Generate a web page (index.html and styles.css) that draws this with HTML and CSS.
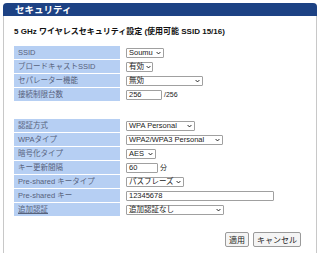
FILE: index.html
```html
<!DOCTYPE html>
<html lang="ja">
<head>
  <meta charset="utf-8">
  <title>セキュリティ</title>
  <link rel="stylesheet" href="styles.css">
</head>
<body>
  <div class="panel">
    <div class="panel-title">セキュリティ</div>
    <div class="panel-body">
      <h3>5 GHz ワイヤレスセキュリティ設定 (使用可能 SSID 15/16)</h3>

      <table class="settings">
        <tr>
          <th>SSID</th>
          <td><span class="sel w-ssid">Soumu<svg class="chev" viewBox="0 0 8 5"><path d="M1 1l3 3 3-3"/></svg></span></td>
        </tr>
        <tr>
          <th>ブロードキャストSSID</th>
          <td><span class="sel w-bcast">有効<svg class="chev" viewBox="0 0 8 5"><path d="M1 1l3 3 3-3"/></svg></span></td>
        </tr>
        <tr>
          <th>セパレーター機能</th>
          <td><span class="sel w-sep">無効<svg class="chev" viewBox="0 0 8 5"><path d="M1 1l3 3 3-3"/></svg></span></td>
        </tr>
        <tr>
          <th>接続制限台数</th>
          <td><span class="inp w-limit">256</span><span class="unit">/256</span></td>
        </tr>
      </table>

      <table class="settings second">
        <tr>
          <th>認証方式</th>
          <td><span class="sel w-auth">WPA Personal<svg class="chev" viewBox="0 0 8 5"><path d="M1 1l3 3 3-3"/></svg></span></td>
        </tr>
        <tr>
          <th>WPAタイプ</th>
          <td><span class="sel w-wpa">WPA2/WPA3 Personal<svg class="chev" viewBox="0 0 8 5"><path d="M1 1l3 3 3-3"/></svg></span></td>
        </tr>
        <tr>
          <th>暗号化タイプ</th>
          <td><span class="sel w-enc">AES<svg class="chev" viewBox="0 0 8 5"><path d="M1 1l3 3 3-3"/></svg></span></td>
        </tr>
        <tr>
          <th>キー更新間隔</th>
          <td><span class="inp w-interval">60</span><span class="unit">分</span></td>
        </tr>
        <tr>
          <th>Pre-shared キータイプ</th>
          <td><span class="sel w-keytype">パスフレーズ<svg class="chev" viewBox="0 0 8 5"><path d="M1 1l3 3 3-3"/></svg></span></td>
        </tr>
        <tr>
          <th>Pre-shared キー</th>
          <td><span class="inp w-key">12345678</span></td>
        </tr>
        <tr>
          <th><a href="#">追加認証</a></th>
          <td><span class="sel w-extra">追加認証なし<svg class="chev" viewBox="0 0 8 5"><path d="M1 1l3 3 3-3"/></svg></span></td>
        </tr>
      </table>

      <div class="actions">
        <button>適用</button>
        <button>キャンセル</button>
      </div>
    </div>
  </div>
</body>
</html>
```

FILE: styles.css
```css
:root {
  --title-bg: #1d4284;
  --label-bg: #b6cff3;
  --label-text: #56627c;
  --border: #c8c8c8;
  --font: "Liberation Sans", "Noto Sans CJK JP", sans-serif;
}

body {
  margin: 0;
  background: #ffffff;
  font-family: var(--font);
  font-size: 8px;
  color: #222;
}

.panel {
  margin: 3px 3px 0;
  border: 1px solid var(--border);
  border-top: none;
  border-radius: 4px 4px 0 0;
  min-height: 260px;
}

.panel-title {
  background: var(--title-bg);
  color: #fff;
  font-weight: bold;
  font-size: 9.5px;
  height: 13px;
  line-height: 13px;
  padding-left: 12px;
  border-radius: 4px 4px 0 0;
  margin: 0 -1px;
}

.panel-body {
  padding: 0 15px 0 10px;
}

h3 {
  font-size: 8px;
  font-weight: bold;
  margin: 11px 0 0;
  height: 10px;
  line-height: 10px;
  color: #111;
}

.settings {
  border-collapse: separate;
  border-spacing: 0 1px;
  margin-top: 8px;
  line-height: 11px;
}

.settings.second {
  margin-top: 16px;
}

.settings th {
  background: var(--label-bg);
  color: var(--label-text);
  font-weight: normal;
  text-align: left;
  width: 102px;
  height: 13px;
  padding: 0 0 0 4px;
  font-size: 7.5px;
}

.settings th a {
  color: var(--label-text);
}

.settings td {
  padding: 0 0 0 6px;
  height: 13px;
  white-space: nowrap;
}

.sel, .inp {
  display: inline-flex;
  align-items: center;
  box-sizing: border-box;
  height: 10px;
  border: 1px solid #a0a0a0;
  border-radius: 1px;
  background: #fff;
  color: #222;
  padding: 0 2px;
  font-size: 7.5px;
  line-height: 8px;
  vertical-align: middle;
}

.sel {
  justify-content: space-between;
  gap: 2px;
}

.chev {
  width: 5px;
  height: 4px;
  flex: none;
  fill: none;
  stroke: #222;
  stroke-width: 1.6;
}

.unit {
  font-size: 7px;
  margin-left: 2px;
  vertical-align: middle;
}

.w-ssid { width: 38px; }
.w-bcast { width: 27px; }
.w-sep { width: 77px; }
.w-limit { width: 36px; }
.w-auth { width: 69px; }
.w-wpa { width: 97px; }
.w-enc { width: 30px; }
.w-interval { width: 32px; }
.w-keytype { width: 58px; }
.w-key { width: 148px; }
.w-extra { width: 98px; }

.actions {
  display: flex;
  justify-content: flex-end;
  gap: 4px;
  margin-top: 15px;
}

button {
  font-family: var(--font);
  font-size: 8px;
  height: 15px;
  padding: 0 3px;
  border: 1px solid #9a9a9a;
  border-radius: 2px;
  background: #f4f4f4;
  color: #222;
}
```
